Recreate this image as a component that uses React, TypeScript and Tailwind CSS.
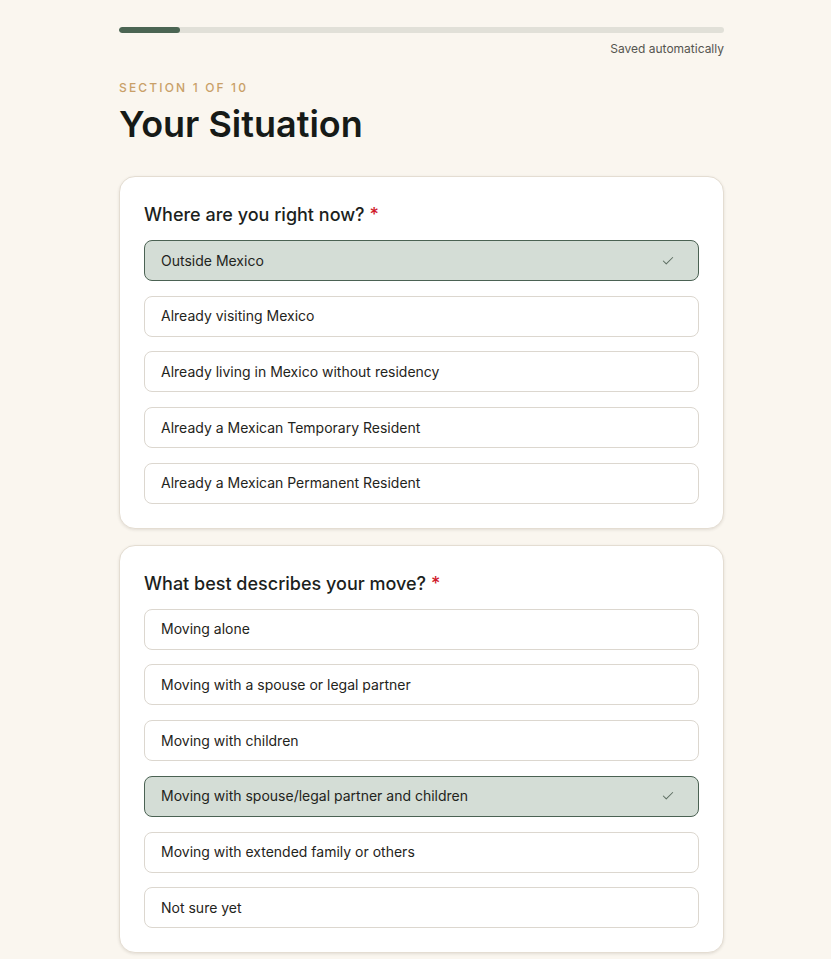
import { Check } from "lucide-react";

interface Question {
  title: string;
  options: string[];
  selected: string;
}

const questions: Question[] = [
  {
    title: "Where are you right now?",
    selected: "Outside Mexico",
    options: [
      "Outside Mexico",
      "Already visiting Mexico",
      "Already living in Mexico without residency",
      "Already a Mexican Temporary Resident",
      "Already a Mexican Permanent Resident",
    ],
  },
  {
    title: "What best describes your move?",
    selected: "Moving with spouse/legal partner and children",
    options: [
      "Moving alone",
      "Moving with a spouse or legal partner",
      "Moving with children",
      "Moving with spouse/legal partner and children",
      "Moving with extended family or others",
      "Not sure yet",
    ],
  },
];

function QuestionCard({ q }: { q: Question }) {
  return (
    <div className="rounded-2xl border border-[#e4ddd2] bg-white p-6 shadow-[0_1px_3px_rgba(60,50,30,0.12)]">
      <h2 className="mb-[11px] text-lg leading-7 font-medium text-[#1c1f1d]">
        {q.title} <span className="text-[#d0192b]">*</span>
      </h2>
      <div className="flex flex-col gap-[14.7px]">
        {q.options.map((opt) => {
          const active = opt === q.selected;
          return (
            <div
              key={opt}
              className={
                active
                  ? "flex h-[41px] items-center justify-between rounded-lg border border-[#4b6253] bg-[#d4ddd6] pr-[23px] pl-4 text-sm text-[#1f2420]"
                  : "flex h-[41px] items-center justify-between rounded-lg border border-[#dcd7cf] bg-white pr-[23px] pl-4 text-sm text-[#1f2420]"
              }
            >
              <span>{opt}</span>
              {active && <Check className="h-[14px] w-[14px] text-[#5d6e62]" strokeWidth={1.75} />}
            </div>
          );
        })}
      </div>
    </div>
  );
}

export default function App() {
  return (
    <div
      className="flex min-h-screen justify-center bg-[#faf6ef] pl-3"
      style={{ fontFamily: "Inter, 'Noto Sans', sans-serif" }}
    >
      <div className="w-[605px] pt-[27px] pb-10">
        <div className="h-[6px] overflow-hidden rounded-full bg-[#e1e0d8]">
          <div className="h-full w-[10%] rounded-full bg-[#4b6553]" />
        </div>
        <div className="mt-2 text-right text-xs text-[#55554f]">Saved automatically</div>

        <div className="mt-[23px] text-xs font-medium tracking-[0.18em] text-[#c9a068]">
          SECTION 1 OF 10
        </div>
        <h1 className="mt-[6px] text-[36px] leading-[44px] font-semibold text-[#161a17]">
          Your Situation
        </h1>

        <div className="mt-[30px] flex flex-col gap-4">
          {questions.map((q) => (
            <QuestionCard key={q.title} q={q} />
          ))}
        </div>
      </div>
    </div>
  );
}
